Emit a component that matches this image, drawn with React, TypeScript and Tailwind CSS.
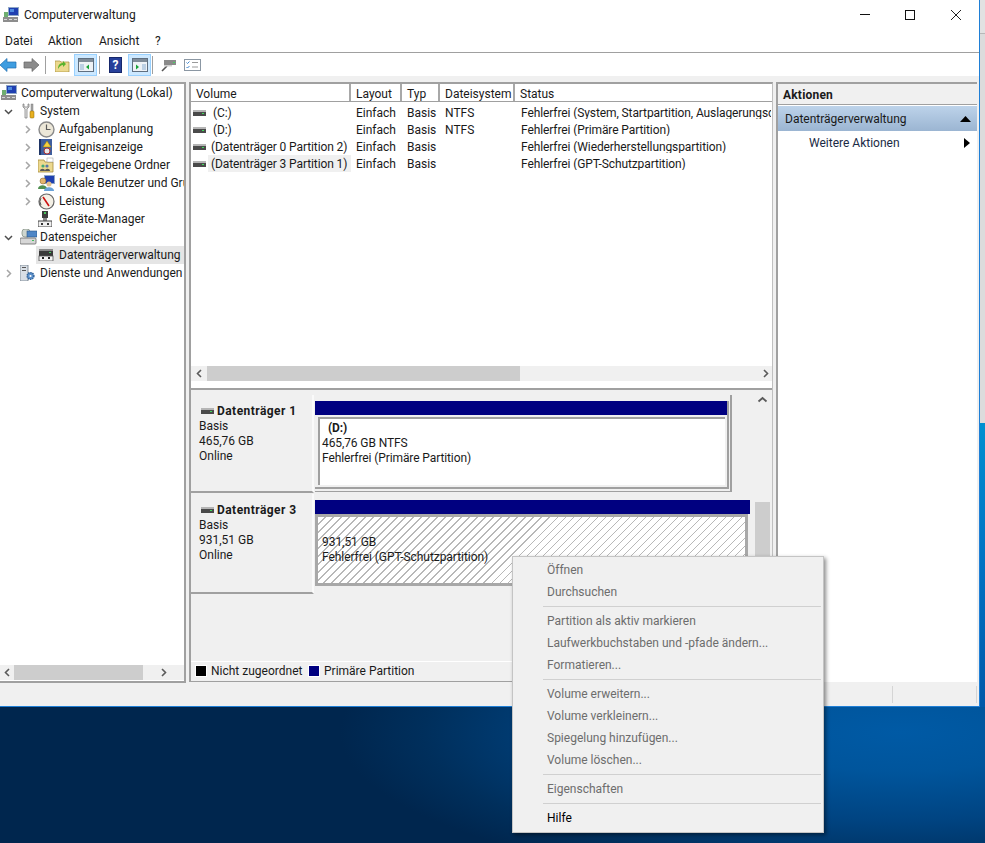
import React from "react";

const F = "font-['Roboto',sans-serif]";

function Drive({ className = "" }: { className?: string }) {
  return (
    <svg width="13" height="6" viewBox="0 0 13 6" className={className}>
      <rect x="0" y="0" width="13" height="2" fill="#b5b5b5" />
      <rect x="0" y="2" width="13" height="4" fill="#4a4a4a" />
      <rect x="9" y="3" width="2" height="1" fill="#3fdc5a" />
    </svg>
  );
}

function Computer({ size = 16 }: { size?: number }) {
  return (
    <svg width={size} height={size} viewBox="0 0 16 16">
      <rect x="5" y="0" width="11" height="9" fill="#8fa7c7" />
      <rect x="6" y="1" width="9" height="7" fill="#1f3fb0" />
      <rect x="7" y="2" width="4" height="3" fill="#4f8be0" />
      <rect x="1" y="5" width="4" height="6" fill="#6fae6f" />
      <rect x="0" y="10" width="15" height="5" fill="#8d8d8d" />
      <rect x="1" y="12" width="3" height="1" fill="#d8d8d8" />
      <rect x="6" y="12" width="3" height="1" fill="#d8d8d8" />
      <rect x="11" y="12" width="3" height="1" fill="#d8d8d8" />
    </svg>
  );
}

function Tools() {
  return (
    <svg width="16" height="16" viewBox="0 0 16 16">
      <path d="M3 1v3l2 2v9h2V6l2-2V1H8v3H4V1z" fill="#e6e6e6" stroke="#777" strokeWidth=".7" />
      <rect x="11" y="1" width="2" height="7" fill="#a9a9a9" stroke="#666" strokeWidth=".4" />
      <rect x="10" y="8" width="4" height="7" rx="1" fill="#e8b020" stroke="#8a6500" strokeWidth=".5" />
    </svg>
  );
}

function Clock() {
  return (
    <svg width="17" height="17" viewBox="0 0 17 17">
      <circle cx="8.5" cy="8.5" r="7.5" fill="#ece7d8" stroke="#8a8a8a" strokeWidth="1.4" />
      <path d="M8.5 3.5v5h4" fill="none" stroke="#5a5a5a" strokeWidth="1.2" />
    </svg>
  );
}

function EventLog() {
  return (
    <svg width="16" height="16" viewBox="0 0 16 16">
      <rect x="1" y="0" width="13" height="16" fill="#3f5f9e" />
      <rect x="1" y="0" width="2" height="16" fill="#1f3566" />
      <path d="M9 2l4 6H5z" fill="#f4d03f" stroke="#a57d00" strokeWidth=".5" />
      <circle cx="9" cy="12" r="3" fill="#e8e8e8" stroke="#b03030" />
    </svg>
  );
}

function SharedFolder() {
  return (
    <svg width="16" height="16" viewBox="0 0 16 16">
      <path d="M0 3h6l1 2h8v10H0z" fill="#ecd98f" stroke="#a78c3a" strokeWidth=".8" />
      <rect x="9" y="1" width="6" height="4" fill="#fff" stroke="#999" strokeWidth=".5" />
      <circle cx="5" cy="9" r="1.6" fill="#4a7" />
      <circle cx="9" cy="9" r="1.6" fill="#57a" />
      <path d="M2 14c0-3 5-3 5 0zM7 14c0-3 5-3 5 0z" fill="#555" />
    </svg>
  );
}

function Users() {
  return (
    <svg width="17" height="16" viewBox="0 0 17 16">
      <rect x="6" y="0" width="11" height="9" fill="#8fa7c7" />
      <rect x="7" y="1" width="9" height="7" fill="#1f3fb0" />
      <circle cx="5" cy="6" r="3" fill="#e3b46d" stroke="#7a5a20" strokeWidth=".5" />
      <path d="M0 14c0-5 9-5 9 0z" fill="#4f8f4f" />
      <circle cx="11" cy="9" r="2.5" fill="#e3c08d" />
      <path d="M6 16c0-5 10-5 10 0z" fill="#6aa2d8" />
    </svg>
  );
}

function Gauge() {
  return (
    <svg width="17" height="17" viewBox="0 0 17 17">
      <circle cx="8.5" cy="8.5" r="7.5" fill="#f4f0e6" stroke="#666" strokeWidth="1.2" />
      <path d="M5 4l6 9" stroke="#cc1111" strokeWidth="1.6" />
      <path d="M3 12a6.5 6.5 0 0 1 0-7" fill="none" stroke="#333" strokeWidth=".8" />
    </svg>
  );
}

function DeviceMgr() {
  return (
    <svg width="14" height="16" viewBox="0 0 14 16">
      <rect x="4" y="0" width="6" height="7" fill="#3d3d3d" />
      <rect x="6" y="1" width="2" height="2" fill="#49c55c" />
      <rect x="5" y="7" width="4" height="3" fill="#888" />
      <rect x="0" y="10" width="14" height="6" fill="#efefef" stroke="#444" strokeWidth="1" />
      <rect x="3" y="12" width="2" height="2" fill="#333" />
      <rect x="9" y="12" width="2" height="2" fill="#333" />
    </svg>
  );
}

function Storage() {
  return (
    <svg width="17" height="16" viewBox="0 0 17 16">
      <rect x="2" y="0" width="8" height="8" rx="3" fill="#cfd6cf" stroke="#7d8a7d" strokeWidth=".7" />
      <rect x="7" y="2" width="10" height="6" fill="#4f86c6" stroke="#2b5688" strokeWidth=".6" />
      <rect x="0" y="9" width="16" height="6" rx="1" fill="#d7d7d7" stroke="#666" strokeWidth=".8" />
      <rect x="12" y="11" width="2" height="1" fill="#3fbf5a" />
    </svg>
  );
}

function DiskIcon() {
  return (
    <svg width="16" height="12" viewBox="0 0 16 12">
      <rect x="1" y="0" width="14" height="7" fill="#3a3a3a" />
      <rect x="1" y="0" width="14" height="2" fill="#8a8a8a" />
      <rect x="11" y="3" width="2" height="1" fill="#46d060" />
      <rect x="1" y="7" width="14" height="5" fill="#f4f4f4" stroke="#555" strokeWidth=".8" />
      <rect x="4" y="8" width="2" height="2" fill="#222" />
      <rect x="10" y="8" width="2" height="2" fill="#222" />
    </svg>
  );
}

function Services() {
  return (
    <svg width="15" height="16" viewBox="0 0 15 16">
      <rect x="0" y="0" width="8" height="16" fill="#d9dfe6" stroke="#6f7b88" strokeWidth=".8" />
      <rect x="2" y="2" width="4" height="1" fill="#555" />
      <rect x="2" y="5" width="4" height="1" fill="#555" />
      <circle cx="10.5" cy="11" r="3.4" fill="#5b8fc9" stroke="#2d5f98" strokeWidth="1.4" strokeDasharray="1.3 .9" />
      <circle cx="10.5" cy="11" r="1.1" fill="#fff" />
    </svg>
  );
}

function Chevron({ dir, dark }: { dir: "r" | "d"; dark?: boolean }) {
  return (
    <svg width="9" height="9" viewBox="0 0 9 9">
      <path
        d={dir === "r" ? "M3 1l3.5 3.5L3 8" : "M1 3l3.5 3.5L8 3"}
        fill="none"
        stroke={dark ? "#4d4d4d" : "#a6a6a6"}
        strokeWidth="1.5"
      />
    </svg>
  );
}

function TreeRow({
  level,
  chevron,
  icon,
  label,
  selected,
}: {
  level: 0 | 1 | 2;
  chevron?: "r" | "d";
  icon: React.ReactNode;
  label: string;
  selected?: boolean;
}) {
  const pad = level === 0 ? "pl-px" : level === 1 ? "pl-[4px]" : "pl-[23px]";
  return (
    <div className={`flex items-center h-[18px] whitespace-nowrap ${pad}`}>
      {level > 0 && (
        <span className="w-[9px] mr-[7px] flex items-center shrink-0">
          {chevron && <Chevron dir={chevron} dark={chevron === "d"} />}
        </span>
      )}
      <div className={`flex items-center h-full grow ${selected ? "bg-[#e5e5e5] -ml-[3px] pl-[3px]" : ""}`}>
        <span className={`flex items-center h-full shrink-0 ${level === 2 ? "w-[21px] -ml-[1px]" : "w-[20px]"}`}>{icon}</span>
        <span className="shrink-0">{label}</span>
      </div>
    </div>
  );
}

function ArrowH({ left }: { left?: boolean }) {
  return (
    <svg width="9" height="9" viewBox="0 0 9 9">
      <path d={left ? "M6 1L2.5 4.5 6 8" : "M3 1l3.5 3.5L3 8"} fill="none" stroke="#5a5a5a" strokeWidth="1.6" />
    </svg>
  );
}

function TbButton({ active, children, className = "" }: { active?: boolean; children: React.ReactNode; className?: string }) {
  return (
    <div
      className={`h-[22px] w-[23px] flex items-center justify-center border ${
        active ? "bg-[#cce8ff] border-[#99d1ff]" : "border-transparent"
      } ${className}`}
    >
      {children}
    </div>
  );
}

function Sep() {
  return <div className="w-px h-[18px] bg-[#a0a0a0]" />;
}

function PaneWinIcon({ green }: { green: "left" | "right" }) {
  return (
    <svg width="16" height="14" viewBox="0 0 16 14">
      <rect x=".5" y=".5" width="15" height="13" fill="#eef2f6" stroke="#5f6f80" />
      <rect x="1" y="1" width="14" height="3" fill="#7f8c99" />
      {green === "left" ? (
        <>
          <rect x="2" y="6" width="4" height="6" fill="#bcd0e4" />
          <path d="M11 6.5v5L8 9z" fill="#19a33a" />
        </>
      ) : (
        <>
          <rect x="10" y="6" width="4" height="6" fill="#bcd0e4" />
          <path d="M4 6.5v5L7 9z" fill="#19a33a" />
        </>
      )}
    </svg>
  );
}

const treeRows = (
  <>
    <TreeRow level={0} icon={<Computer />} label="Computerverwaltung (Lokal)" />
    <TreeRow level={1} chevron="d" icon={<Tools />} label="System" />
    <TreeRow level={2} chevron="r" icon={<Clock />} label="Aufgabenplanung" />
    <TreeRow level={2} chevron="r" icon={<EventLog />} label="Ereignisanzeige" />
    <TreeRow level={2} chevron="r" icon={<SharedFolder />} label="Freigegebene Ordner" />
    <TreeRow level={2} chevron="r" icon={<Users />} label="Lokale Benutzer und Gruppen" />
    <TreeRow level={2} chevron="r" icon={<Gauge />} label="Leistung" />
    <TreeRow level={2} icon={<DeviceMgr />} label="Geräte-Manager" />
    <TreeRow level={1} chevron="d" icon={<Storage />} label="Datenspeicher" />
    <TreeRow level={2} icon={<DiskIcon />} label="Datenträgerverwaltung" selected />
    <TreeRow level={1} chevron="r" icon={<Services />} label="Dienste und Anwendungen" />
  </>
);

const cols = ["w-[160px]", "w-[51px]", "w-[38px]", "w-[75px]", "grow"];

function Header() {
  const labels = ["Volume", "Layout", "Typ", "Dateisystem", "Status"];
  return (
    <div className="flex h-[18px] shrink-0 border-b border-[#a0a0a0] bg-white">
      {labels.map((l, i) => (
        <div
          key={l}
          className={`${cols[i]} h-full flex items-center pl-[5px] pt-[2px] ${i < 4 ? "border-r-2 border-[#a8a8a8]" : ""}`}
        >
          {l}
        </div>
      ))}
    </div>
  );
}

function VolRow({
  name,
  indent,
  fs,
  status,
  selected,
}: {
  name: string;
  indent: string;
  fs: string;
  status: string;
  selected?: boolean;
}) {
  return (
    <div className="flex h-[17px] items-center whitespace-nowrap">
      <div className="w-[160px] h-full flex items-center pl-[2px] shrink-0">
        <Drive className="shrink-0" />
        <div className={`${indent} h-full flex items-center grow ${selected ? "bg-[#f0f0f0] pl-[3px]" : ""}`}>
          <span className="shrink-0 tracking-[-0.1px]">{name}</span>
        </div>
      </div>
      <div className="w-[51px] pl-[5px] shrink-0">Einfach</div>
      <div className="w-[38px] pl-[5px] shrink-0">Basis</div>
      <div className="w-[75px] pl-[5px] shrink-0">{fs}</div>
      <div className="pl-[6px] w-[256px] overflow-hidden tracking-[-0.1px]">{status}</div>
    </div>
  );
}

function DiskLabel({ title, size }: { title: string; size: string }) {
  return (
    <div className="w-[123px] shrink-0 h-full border-r-2 border-b-2 border-r-[#fafafa] border-b-[#a0a0a0] pl-[8px] pt-[8px] leading-[15px]">
      <div className="flex items-center font-bold h-[16px]">
        <Drive className="mr-[3px] ml-[2px]" />
        <span className="tracking-[0.45px]">{title}</span>
      </div>
      <div>Basis</div>
      <div>{size}</div>
      <div>Online</div>
    </div>
  );
}

function MenuItem({ children, on }: { children: string; on?: boolean }) {
  return (
    <div className={`h-[22px] flex items-center pl-[34px] ${on ? "text-black" : "text-[#6d6d6d]"}`}>{children}</div>
  );
}

function MenuSep({ my = "my-[3px]" }: { my?: string }) {
  return <div className={`h-px bg-[#d0d0d0] ml-[30px] mr-[2px] ${my}`} />;
}

export default function App() {
  return (
    <div className={`relative w-[985px] h-[843px] overflow-hidden flex flex-col text-[12px] leading-none text-[#1a1a1a] bg-white ${F}`}>
      <div className="flex h-[707px] shrink-0">
        <div className="w-[980px] shrink-0 flex flex-col border-r border-b border-[#1f7fd6] bg-[#f0f0f0]">
          {/* title bar */}
          <div className="h-[30px] shrink-0 bg-white flex items-center pl-[3px]">
            <Computer />
            <span className="ml-[5px]">Computerverwaltung</span>
            <div className="ml-auto flex items-center">
              <svg width="10" height="10" viewBox="0 0 10 10" className="mr-[35px]"><path d="M0 4.5h10" stroke="#111" /></svg>
              <svg width="10" height="10" viewBox="0 0 10 10" className="mr-[36px]"><rect x=".5" y=".5" width="9" height="9" fill="none" stroke="#111" /></svg>
              <svg width="10" height="10" viewBox="0 0 10 10" className="mr-[18px]"><path d="M0 0l10 10M10 0L0 10" stroke="#222" /></svg>
            </div>
          </div>
          {/* menu */}
          <div className="h-[23px] shrink-0 bg-white flex items-center border-b border-[#a0a0a0] pb-px">
            <span className="w-[48px] pl-[5px]">Datei</span>
            <span className="w-[51px]">Aktion</span>
            <span className="w-[56px]">Ansicht</span>
            <span>?</span>
          </div>
          {/* toolbar */}
          <div className="h-[23px] shrink-0 bg-white flex items-center">
            <svg width="17" height="14" viewBox="0 0 17 14" className="ml-0">
              <path d="M0 7l7-6.5V4h9v6H7v3.5z" fill="#3f9de0" stroke="#1f6fb0" strokeWidth=".7" />
            </svg>
            <svg width="17" height="14" viewBox="0 0 17 14" className="ml-[6px]">
              <path d="M16 7L9 .5V4H1v6h8v3.5z" fill="#8c8c8c" stroke="#666" strokeWidth=".7" />
            </svg>
            <div className="ml-[5px]"><Sep /></div>
            <svg width="15" height="14" viewBox="0 0 15 14" className="ml-[9px]">
              <path d="M0 3h5l1 1h8v10H0z" fill="#ecd98f" stroke="#a78c3a" strokeWidth=".7" />
              <path d="M3 11c0-4 2-6 5-6V3l3 3-3 3V7c-2 0-3 1-5 4z" fill="#59b32e" />
            </svg>
            <TbButton active className="ml-[4px]"><PaneWinIcon green="left" /></TbButton>
            <div className="ml-[2px]"><Sep /></div>
            <div className="ml-[9px] w-[13px] h-[16px] bg-[#27409a] border border-[#16276b] text-white font-bold flex items-center justify-center">?</div>
            <TbButton active className="ml-[6px]"><PaneWinIcon green="right" /></TbButton>
            <div className="ml-[1px]"><Sep /></div>
            <svg width="16" height="14" viewBox="0 0 16 14" className="ml-[8px]">
              <rect x="3" y="2" width="12" height="5" fill="#8a8a8a" />
              <rect x="12" y="4" width="2" height="1" fill="#46d060" />
              <path d="M6 8L1 13" stroke="#555" strokeWidth="1.6" />
              <rect x="3" y="7" width="8" height="1.5" fill="#cfcfcf" />
            </svg>
            <svg width="17" height="12" viewBox="0 0 17 12" className="ml-[7px]">
              <rect x=".5" y=".5" width="16" height="11" fill="#fff" stroke="#8b97a3" />
              <path d="M2.5 3.5l1 1 2-2M2.5 8l1 1 2-2" fill="none" stroke="#3f87d0" />
              <path d="M8 3.5h6M8 8h6" stroke="#9a9a9a" />
            </svg>
          </div>
          {/* panes */}
          <div className="flex pt-[6px] h-[607px] shrink-0">
            {/* left */}
            <div className="w-[186px] h-[601px] shrink-0 bg-white border-t-2 border-r-2 border-b-2 border-[#a0a0a0] flex flex-col">
              <div className="grow overflow-hidden">{treeRows}</div>
              <div className="h-[15px] flex items-center bg-[#f0f0f0] shrink-0 mb-px">
                <div className="w-[14px] pl-px flex justify-center"><ArrowH left /></div>
                <div className="w-[129px] h-full bg-[#cdcdcd]" />
                <div className="grow flex justify-center"><ArrowH /></div>
              </div>
            </div>
            {/* middle */}
            <div className="ml-[3px] w-[584px] h-[600px] shrink-0 flex flex-col border-t-2 border-l-2 border-[#a0a0a0] border-r border-b border-r-[#c0c0c0] border-b-[#a0a0a0]">
              <div className="h-[304px] shrink-0 bg-white flex flex-col">
                <Header />
                <div className="h-[2px]" />
                <VolRow name="(C:)" indent="ml-[7px]" fs="NTFS" status="Fehlerfrei (System, Startpartition, Auslagerungsdatei)" />
                <VolRow name="(D:)" indent="ml-[7px]" fs="NTFS" status="Fehlerfrei (Primäre Partition)" />
                <VolRow name="(Datenträger 0 Partition 2)" indent="ml-[5px]" fs="" status="Fehlerfrei (Wiederherstellungspartition)" />
                <VolRow name="(Datenträger 3 Partition 1)" indent="ml-[2px]" fs="" status="Fehlerfrei (GPT-Schutzpartition)" selected />
                <div className="grow" />
                <div className="h-[15px] flex items-center bg-[#f0f0f0] shrink-0 mb-[7px]">
                  <div className="w-[16px] flex justify-center"><ArrowH left /></div>
                  <div className="w-[313px] h-full bg-[#cdcdcd]" />
                  <div className="grow flex justify-end pr-[2px]"><ArrowH /></div>
                </div>
              </div>
              <div className="h-[2px] shrink-0 bg-[#a0a0a0]" />
              <div className="grow flex flex-col bg-[#f0f0f0] min-h-0">
                <div className="grow flex min-h-0 pt-[5px]">
                  <div className="grow flex flex-col">
                    {/* disk 1 */}
                    <div className="h-[99px] flex pb-px">
                      <DiskLabel title="Datenträger 1" size="465,76 GB" />
                      <div className="w-[417px] h-[97px] ml-px border-r-2 border-b border-[#a0a0a0] pt-[6px]">
                        <div className="w-[414px] h-[88px] border-r-2 border-b-2 border-[#a0a0a0]">
                          <div className="h-[14px] bg-[#000080]" />
                          <div className="ml-[3px] mt-[2px] mr-[2px] h-[68px] bg-white border-t-2 border-l-2 border-[#a0a0a0] pl-[2px] pt-[2px] leading-[15px] tracking-[-0.1px]">
                            <div className="font-bold pl-[6px]">(D:)</div>
                            <div>465,76 GB NTFS</div>
                            <div>Fehlerfrei (Primäre Partition)</div>
                          </div>
                        </div>
                      </div>
                    </div>
                    {/* disk 3 */}
                    <div className="h-[100px] flex">
                      <DiskLabel title="Datenträger 3" size="931,51 GB" />
                      <div className="w-[435px] ml-px pt-[6px]">
                        <div className="h-[14px] bg-[#000080]" />
                        <div className="w-[433px] h-[72px] border-[3px] border-[#a8a8a8] bg-[repeating-linear-gradient(135deg,#ffffff_0,#ffffff_4.86px,#b8b8b8_4.86px,#b8b8b8_5.66px)] pl-[4px] pt-[18px] leading-[15px] tracking-[-0.05px]">
                          <div>931,51 GB</div>
                          <div>Fehlerfrei (GPT-Schutzpartition)</div>
                        </div>
                      </div>
                    </div>
                    <div className="grow" />
                  </div>
                  {/* vscroll */}
                  <div className="w-[15px] mr-[2px] shrink-0 flex flex-col items-center">
                    <svg width="11" height="9" viewBox="0 0 11 9"><path d="M1.5 6.5L5.5 3l4 3.5" fill="none" stroke="#5a5a5a" strokeWidth="1.8" /></svg>
                    <div className="h-[98px]" />
                    <div className="w-[15px] h-[60px] bg-[#cdcdcd]" />
                  </div>
                </div>
                <div className="h-[20px] shrink-0 border-t border-white flex items-center pl-[4px] pb-px">
                  <span className="w-[12px] h-[12px] bg-black border border-white shrink-0" />
                  <span className="w-[101px] pl-[4px]">Nicht zugeordnet</span>
                  <span className="w-[12px] h-[12px] bg-[#000080] border border-white shrink-0" />
                  <span className="ml-[4px]">Primäre Partition</span>
                </div>
              </div>
            </div>
            {/* right */}
            <div className="ml-[3px] w-[201px] h-[600px] shrink-0 border-t-2 border-l-2 border-[#a0a0a0] bg-white flex flex-col">
              <div className="h-[21px] shrink-0 bg-[#f0f0f0] border-b border-[#a0a0a0] flex items-center pl-[5px] pt-px font-bold tracking-[0.2px]">Aktionen</div>
              <div className="h-[25px] mt-px shrink-0 bg-linear-to-b from-[#bdd3ea] to-[#9bb5d2] flex items-center pl-[7px] pr-[6px]">
                <span>Datenträgerverwaltung</span>
                <svg width="11" height="6" viewBox="0 0 11 6" className="ml-auto"><path d="M5.5 0L11 6H0z" fill="#000" /></svg>
              </div>
              <div className="h-[24px] flex items-center pl-[31px] pr-[7px] shrink-0">
                <span className="text-[#1a2a44]">Weitere Aktionen</span>
                <svg width="6" height="10" viewBox="0 0 6 10" className="ml-auto"><path d="M0 0l6 5-6 5z" fill="#000" /></svg>
              </div>
            </div>
          </div>
          {/* status bar */}
          <div className="grow flex items-stretch py-[3px]">
            <div className="w-[892px]" />
            <div className="w-[85px] border-l border-r border-[#d5d5d5]" />
          </div>
        </div>
        {/* sliver of what lies behind the window */}
        <div className="grow flex flex-col">
          <div className="h-[33px] bg-[#e2e2e2]" />
          <div className="h-px bg-[#b8b8b8]" />
          <div className="h-[389px] bg-[#dcdcdc]" />
          <div className="grow bg-linear-to-b from-[#0090d0] via-[#0072c2] to-[#0058a8]" />
        </div>
      </div>
      {/* desktop */}
      <div className="grow bg-[#00234a] bg-[radial-gradient(ellipse_560px_160px_at_900px_25px,#005aa5_0%,#00559c_25%,#004482_55%,#002f5c_85%,#00264e_100%)]" />
      {/* context menu */}
      <div className="absolute left-[512px] top-[556px] w-[312px] h-[277px] bg-[#f0f0f0] border border-[#c4c4c4] shadow-[2px_2px_4px_rgba(0,0,0,0.45)] pt-[2px]">
        <MenuItem>Öffnen</MenuItem>
        <MenuItem>Durchsuchen</MenuItem>
        <MenuSep />
        <MenuItem>Partition als aktiv markieren</MenuItem>
        <MenuItem>Laufwerkbuchstaben und -pfade ändern...</MenuItem>
        <MenuItem>Formatieren...</MenuItem>
        <MenuSep />
        <MenuItem>Volume erweitern...</MenuItem>
        <MenuItem>Volume verkleinern...</MenuItem>
        <MenuItem>Spiegelung hinzufügen...</MenuItem>
        <MenuItem>Volume löschen...</MenuItem>
        <MenuSep />
        <MenuItem>Eigenschaften</MenuItem>
        <MenuSep />
        <MenuItem on>Hilfe</MenuItem>
      </div>
    </div>
  );
}
